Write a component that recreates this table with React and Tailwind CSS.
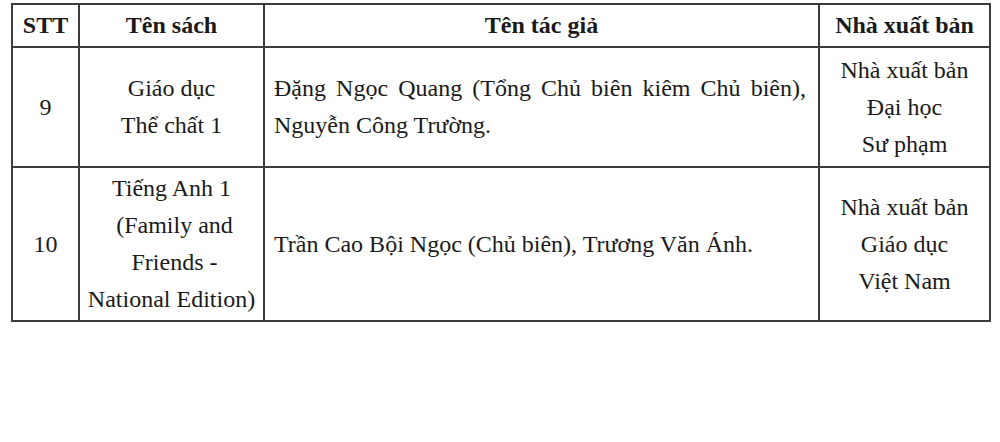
const rows = [
  {
    stt: "9",
    book: ["Giáo dục", "Thể chất 1"],
    authors: "Đặng Ngọc Quang (Tổng Chủ biên kiêm Chủ biên), Nguyễn Công Trường.",
    publisher: ["Nhà xuất bản", "Đại học", "Sư phạm"],
    height: "h-[120px]",
  },
  {
    stt: "10",
    book: ["Tiếng Anh 1", "\u00a0(Family and", "\u00a0Friends -", "National Edition)"],
    authors: "Trần Cao Bội Ngọc (Chủ biên), Trương Văn Ánh.",
    publisher: ["Nhà xuất bản", "Giáo dục", "Việt Nam"],
    height: "h-[154px]",
  },
];

const App = () => {
  return (
    <div className="w-[1000px] h-[442px] bg-white pt-[3px] pl-[11px] text-[#1a1a1a] font-['Liberation_Serif',serif] text-[24px] leading-[37px]">
      <table className="table-fixed border-collapse w-[978px]">
        <colgroup>
          <col className="w-[67px]" />
          <col className="w-[185px]" />
          <col className="w-[555px]" />
          <col className="w-[171px]" />
        </colgroup>
        <thead>
          <tr className="h-[43px] font-bold text-[24px]">
            <th className="border-2 border-[#3c3c3c] text-center">STT</th>
            <th className="border-2 border-[#3c3c3c] text-center">Tên sách</th>
            <th className="border-2 border-[#3c3c3c] text-center">Tên tác giả</th>
            <th className="border-2 border-[#3c3c3c] text-center">Nhà xuất bản</th>
          </tr>
        </thead>
        <tbody>
          {rows.map((row) => (
            <tr key={row.stt} className={row.height}>
              <td className="border-2 border-[#3c3c3c] text-center align-middle">{row.stt}</td>
              <td className="border-2 border-[#3c3c3c] text-center align-middle whitespace-pre">
                {row.book.map((line, i) => (
                  <div key={i}>{line}</div>
                ))}
              </td>
              <td className="border-2 border-[#3c3c3c] align-middle pl-[9px] pr-[12px] text-justify">
                {row.authors}
              </td>
              <td className="border-2 border-[#3c3c3c] text-center align-middle">
                {row.publisher.map((line, i) => (
                  <div key={i}>{line}</div>
                ))}
              </td>
            </tr>
          ))}
        </tbody>
      </table>
    </div>
  );
};

export default App;
